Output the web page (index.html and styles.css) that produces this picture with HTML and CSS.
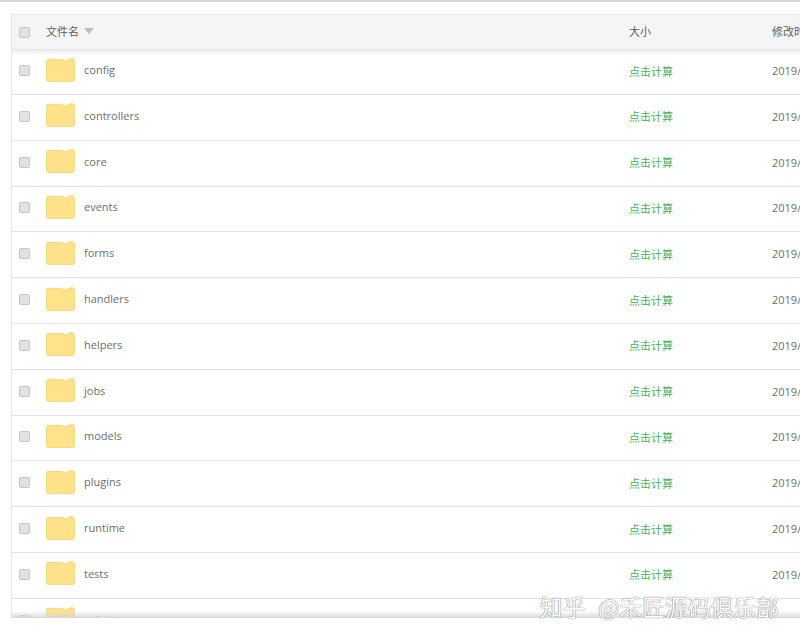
FILE: index.html
```html
<!DOCTYPE html>
<html lang="zh-CN">
<head>
    <meta charset="UTF-8">
    <meta name="viewport" content="width=device-width, initial-scale=1.0">
    <title>文件列表</title>
    <link rel="stylesheet" href="styles.css">
</head>
<body>

<svg class="defs" width="0" height="0" aria-hidden="true">
    <symbol id="folder" viewBox="0 0 30 25">
        <path d="M2 1.5 H16 L20 3 L26 .6 Q29.500 .2 29.500 3 V22.500 Q29.500 24.500 27.500 24.500 H2 Q.5 24.500 .5 22.500 V3 Q.5 1.500 2 1.500 Z" fill="#ffe28a" stroke="#f5d67c" stroke-width="1"/>
    </symbol>
</svg>

<div class="file-list">
    <div class="row head">
        <span class="check"></span>
        <div class="name-col">文件名 <i class="sort"></i></div>
        <div class="size-col">大小</div>
        <div class="date-col">修改时间</div>
    </div>

    <div class="row"><span class="check"></span><div class="name-col"><svg class="folder"><use href="#folder"/></svg>config</div><div class="size-col calc">点击计算</div><div class="date-col">2019/08/06 10:21</div></div>
    <div class="row"><span class="check"></span><div class="name-col"><svg class="folder"><use href="#folder"/></svg>controllers</div><div class="size-col calc">点击计算</div><div class="date-col">2019/08/06 10:21</div></div>
    <div class="row"><span class="check"></span><div class="name-col"><svg class="folder"><use href="#folder"/></svg>core</div><div class="size-col calc">点击计算</div><div class="date-col">2019/08/06 10:21</div></div>
    <div class="row"><span class="check"></span><div class="name-col"><svg class="folder"><use href="#folder"/></svg>events</div><div class="size-col calc">点击计算</div><div class="date-col">2019/08/06 10:21</div></div>
    <div class="row"><span class="check"></span><div class="name-col"><svg class="folder"><use href="#folder"/></svg>forms</div><div class="size-col calc">点击计算</div><div class="date-col">2019/08/06 10:21</div></div>
    <div class="row"><span class="check"></span><div class="name-col"><svg class="folder"><use href="#folder"/></svg>handlers</div><div class="size-col calc">点击计算</div><div class="date-col">2019/08/06 10:21</div></div>
    <div class="row"><span class="check"></span><div class="name-col"><svg class="folder"><use href="#folder"/></svg>helpers</div><div class="size-col calc">点击计算</div><div class="date-col">2019/08/06 10:21</div></div>
    <div class="row"><span class="check"></span><div class="name-col"><svg class="folder"><use href="#folder"/></svg>jobs</div><div class="size-col calc">点击计算</div><div class="date-col">2019/08/06 10:21</div></div>
    <div class="row"><span class="check"></span><div class="name-col"><svg class="folder"><use href="#folder"/></svg>models</div><div class="size-col calc">点击计算</div><div class="date-col">2019/08/06 10:21</div></div>
    <div class="row"><span class="check"></span><div class="name-col"><svg class="folder"><use href="#folder"/></svg>plugins</div><div class="size-col calc">点击计算</div><div class="date-col">2019/08/06 10:21</div></div>
    <div class="row"><span class="check"></span><div class="name-col"><svg class="folder"><use href="#folder"/></svg>runtime</div><div class="size-col calc">点击计算</div><div class="date-col">2019/08/06 10:21</div></div>
    <div class="row"><span class="check"></span><div class="name-col"><svg class="folder"><use href="#folder"/></svg>tests</div><div class="size-col calc">点击计算</div><div class="date-col">2019/08/06 10:21</div></div>
    <div class="row"><span class="check"></span><div class="name-col"><svg class="folder"><use href="#folder"/></svg>validators</div><div class="size-col calc">点击计算</div><div class="date-col">2019/08/06 10:21</div></div>
</div>

<div class="watermark">知乎 @禾匠源码俱乐部</div>

</body>
</html>
```

FILE: styles.css
```css
html, body { height: 100%; }
body { margin: 0; background: #fff; color: #6e6e6e; font-family: "Open Sans", "Noto Sans CJK SC", sans-serif; font-size: 11px; overflow: hidden; position: relative; border-top: 2px solid #d6d6d6; box-sizing: border-box; }
.defs { display: block; height: 0; }

.file-list { margin: 12px 0 0 11px; width: 860px; height: 604px; overflow: hidden; position: relative; border-left: 1px solid #e6e6e6; box-sizing: border-box; }
.file-list::after { content: ""; position: absolute; left: 0; right: 0; bottom: 0; height: 7px; background: linear-gradient(rgba(225,225,225,0), #d8d8d8); }

.row { display: flex; align-items: center; height: 45.8px; padding-bottom: 2px; box-sizing: border-box; border-bottom: 1px solid #e2e2e2; }
.row:nth-child(2) { height: 46px; }
.head { height: 35px; padding-bottom: 3px; background: #f5f5f5; border-top: 1px solid #e6e6e6; border-bottom: none; color: #5c5c5c; box-shadow: 0 2px 5px rgba(0,0,0,.14); position: relative; z-index: 1; }

.check { width: 11px; height: 11px; margin-left: 7px; background: #e2e2e2; border: 1px solid #c6c6c6; border-radius: 2px; flex: none; box-sizing: border-box; }
.head .check { margin-top: 3px; }
.name-col { width: 583px; margin-left: 16px; padding-bottom: 2px; flex: none; display: flex; align-items: center; }
.head .name-col { padding-bottom: 0; }
.size-col { width: 143px; flex: none; }
.date-col { flex: none; white-space: nowrap; }
.calc { color: #4caf5a; }

.sort { width: 0; height: 0; margin-left: 5px; margin-top: 1px; border: 5.5px solid transparent; border-top: 6px solid #bdbdbd; border-bottom: none; }
.folder { width: 29px; height: 24px; margin-right: 9px; flex: none; }

.watermark { position: absolute; left: 540px; top: 590px; font-family: "Noto Sans CJK SC", sans-serif; font-size: 22.5px; line-height: 28px; word-spacing: 7px; letter-spacing: .3px; color: #fff; text-shadow: 0 0 1px #777, 0 0 1px #777; white-space: nowrap; }
```
